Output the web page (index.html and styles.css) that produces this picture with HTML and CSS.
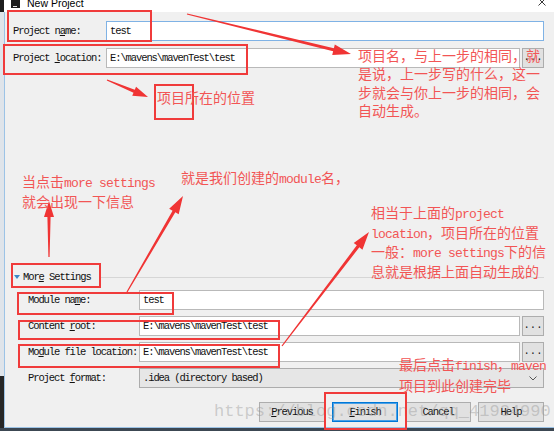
FILE: index.html
```html
<!DOCTYPE html>
<html lang="zh-CN">
<head>
<meta charset="utf-8">
<title>New Project</title>
<link rel="stylesheet" href="styles.css">
</head>
<body>
<div class="screen">
  <div class="titlebar">
    <span class="app-icon"><span class="app-icon-bar"></span></span>
    <span class="title">New Project</span>
    <svg class="close" width="8" height="8" viewBox="0 0 8 8"><path d="M0.5 0.5L7.5 7.5M7.5 0.5L0.5 7.5" stroke="#3a3a3a" stroke-width="1"/></svg>
  </div>
  <div class="frame">
    <div class="edge"></div>
    <div class="dialog">
      <div class="form top-form">
        <span class="lbl">Project n<u>a</u>me:</span>
        <div class="input focus">test</div>
        <span class="lbl">Project <u>l</u>ocation:</span>
        <div class="field"><div class="input">E:\mavens\mavenTest\test</div><div class="browse">...</div></div>
      </div>
      <div class="more">
        <span class="tri"></span><span class="lbl">Mor<u>e</u> Settings</span><span class="sep"></span>
      </div>
      <div class="form module-form">
        <span class="lbl">Module na<u>m</u>e:</span>
        <div class="input">test</div>
        <span class="lbl">Content <u>r</u>oot:</span>
        <div class="field"><div class="input">E:\mavens\mavenTest\test</div><div class="browse">...</div></div>
        <span class="lbl">Mo<u>d</u>ule file location:</span>
        <div class="field"><div class="input">E:\mavens\mavenTest\test</div><div class="browse">...</div></div>
        <span class="lbl">Project <u>f</u>ormat:</span>
        <div class="combo"><span>.idea (directory based)</span><svg class="chev" width="8" height="5" viewBox="0 0 8 5"><path d="M0.5 0.5L4 4L7.5 0.5" fill="none" stroke="#555" stroke-width="1"/></svg></div>
      </div>
      <div class="buttons">
        <div class="btn"><u>P</u>revious</div>
        <div class="btn default"><u>F</u>inish</div>
        <div class="btn">Cancel</div>
        <div class="btn">Help</div>
      </div>
    </div>
  </div>
  <div class="taskbar"></div>

  <div class="notes">
    <div class="watermark">https://blog.csdn.net/qq_41934990</div>

    <div class="box box-name"></div>
    <div class="box box-loc"></div>
    <div class="box box-small"></div>
    <div class="box box-more"></div>
    <div class="box box-mname"></div>
    <div class="box box-root"></div>
    <div class="box box-mfile"></div>
    <div class="box box-finish"></div>

    <svg class="arrows" width="554" height="431" viewBox="0 0 554 431">
      <polygon points="186.86,14.58 333.13,51.28 332.21,55.07 351,54 334.81,44.39 333.89,48.18 187.14,13.42"/>
      <polygon points="106.77,80.55 133.53,92.73 132.22,95.87 148,97 136.06,86.63 134.75,89.77 107.23,79.45"/>
      <polygon points="49.6,257 50.6,217 54,217 49,201 44,217 47.4,217 48.4,257"/>
      <polygon points="127.52,292.3 175.31,212.36 178.68,214.32 183,196 169.18,208.78 172.55,210.74 126.48,291.7"/>
      <polygon points="282.48,346.36 359.35,247.28 362.45,249.65 369,232 353.71,242.97 356.81,245.34 281.52,345.64"/>
    </svg>

    <div class="note note-a">项目名，与上一步的相同，就<br>是说，上一步写的什么，这一<br>步就会与你上一步的相同，会<br>自动生成。</div>
    <div class="note note-b">项目所在的位置</div>
    <div class="note note-c">当点击<span class="m">more settings</span><br>就会出现一下信息</div>
    <div class="note note-d">就是我们创建的<span class="m">module</span>名，</div>
    <div class="note note-e">相当于上面的<span class="m">project</span><br><span class="m">location</span>，项目所在的位置<br>一般：<span class="m">more settings</span>下的信<br>息就是根据上面自动生成的</div>
    <div class="note note-f">最后点击<span class="m">finish</span>，<span class="m">maven</span><br>项目到此创建完毕</div>
  </div>
</div>
</body>
</html>
```

FILE: styles.css
```css
* { box-sizing: border-box; }

html, body {
  margin: 0;
  padding: 0;
}

body {
  width: 554px;
  height: 431px;
  overflow: hidden;
  background: #f0f0f0;
}

.screen {
  position: relative;
  width: 554px;
  height: 431px;
  display: flex;
  flex-direction: column;
  font-family: "Liberation Mono", monospace;
  font-size: 10.5px;
  letter-spacing: -1.1px;
  color: #111;
}

.titlebar {
  height: 12px;
  flex: none;
  display: flex;
  align-items: flex-start;
  background: #ffffff;
  border-left: 4px solid #1d1d1d;
  padding-left: 7px;
  overflow: hidden;
}

.app-icon {
  width: 9px;
  height: 8px;
  background: #1b1b1b;
  position: relative;
  flex: none;
}

.app-icon-bar {
  position: absolute;
  left: 2px;
  bottom: 1px;
  width: 4px;
  height: 1px;
  background: #e0e0e0;
}

.title {
  margin-left: 7px;
  margin-top: -2px;
  font-family: "Liberation Sans", Arial, sans-serif;
  font-size: 10.5px;
  line-height: 10.5px;
  letter-spacing: 0;
  color: #000;
}

.close {
  margin-left: auto;
  margin-right: 8px;
  margin-top: -2px;
}

.frame {
  flex: 1;
  display: flex;
  min-height: 0;
}

.edge {
  width: 4px;
  flex: none;
  background: linear-gradient(to bottom, #dfe4ea 0, #dfe4ea 364px, #262626 364px);
}

.dialog {
  flex: 1;
  background: #f0f0f0;
  border-left: 1px solid #9cc3e6;
  border-bottom: 1px solid #9cc3e6;
  padding: 9px 10px 0 8px;
}

.form {
  display: grid;
  grid-auto-rows: 20px;
  align-items: center;
}

.top-form {
  grid-template-columns: 93px 1fr;
  row-gap: 7px;
}

.module-form {
  margin-top: 5px;
  padding-left: 15px;
  grid-template-columns: 111px 1fr;
  row-gap: 6px;
}

.lbl {
  white-space: nowrap;
  color: #111;
}

.input {
  height: 20px;
  background: #ffffff;
  border: 1px solid #b9b9b9;
  padding-left: 3px;
  line-height: 18px;
  white-space: nowrap;
  overflow: hidden;
  color: #111;
}

.input.focus {
  border-color: #7fb2e5;
}

.field {
  display: flex;
  gap: 2px;
  height: 20px;
}

.field .input {
  flex: 1;
}

.browse {
  width: 22px;
  flex: none;
  background: #e1e1e1;
  border: 1px solid #adadad;
  text-align: center;
  line-height: 17px;
  letter-spacing: 0;
  color: #222;
}

.combo {
  height: 20px;
  background: #e6e6e6;
  border: 1px solid #acacac;
  display: flex;
  align-items: center;
  padding: 0 6px 0 3px;
  justify-content: space-between;
  white-space: nowrap;
}

.more {
  margin-top: 201px;
  height: 16px;
  display: flex;
  align-items: center;
}

.tri {
  width: 0;
  height: 0;
  margin-left: 1px;
  border-left: 3px solid transparent;
  border-right: 3px solid transparent;
  border-top: 4px solid #3d86c6;
  margin-right: 3px;
}

.sep {
  flex: 1;
  height: 1px;
  background: #d6d6d6;
  margin-left: 10px;
  margin-top: 1px;
}

.buttons {
  margin-top: 14px;
  display: flex;
  justify-content: flex-end;
  gap: 7px;
}

.btn {
  width: 66px;
  height: 20px;
  background: #e1e1e1;
  border: 1px solid #adadad;
  text-align: center;
  line-height: 18px;
  color: #111;
}

.btn.default {
  border-color: #0078d7;
  box-shadow: inset 0 0 0 1px #4aa0e6;
}

.taskbar {
  height: 3px;
  flex: none;
  background: #3c4752;
}

.notes {
  position: absolute;
  left: 0;
  top: 0;
  width: 554px;
  height: 431px;
  pointer-events: none;
}

.watermark {
  position: absolute;
  left: 214px;
  top: 403px;
  font-family: "Liberation Mono", monospace;
  font-size: 17px;
  line-height: 17px;
  letter-spacing: 0;
  color: rgba(150, 150, 150, 0.42);
  white-space: nowrap;
}

.box {
  position: absolute;
  border: 2px solid #f03b3b;
}

.box-name { left: 7px; top: 10px; width: 145px; height: 32px; }
.box-loc { left: 3px; top: 44px; width: 245px; height: 31px; }
.box-small { left: 154px; top: 84px; width: 40px; height: 36px; }
.box-more { left: 11px; top: 263px; width: 90px; height: 25px; }
.box-mname { left: 17px; top: 292px; width: 157px; height: 23px; }
.box-root { left: 18px; top: 320px; width: 262px; height: 20px; }
.box-mfile { left: 18px; top: 344px; width: 262px; height: 24px; }
.box-finish { left: 324px; top: 392px; width: 83px; height: 38px; }

.arrows {
  position: absolute;
  left: 0;
  top: 0;
}

.arrows polygon {
  fill: #f03434;
}

.note {
  position: absolute;
  font-family: "Noto Sans CJK SC", sans-serif;
  font-size: 14px;
  line-height: 18px;
  letter-spacing: 0;
  color: #f25555;
  white-space: nowrap;
}

.note .m {
  font-family: "Liberation Mono", monospace;
  font-size: 13px;
  letter-spacing: -0.8px;
}

.note-a { left: 358px; top: 46px; line-height: 18.3px; }
.note-b { left: 157px; top: 88px; }
.note-c { left: 22px; top: 173px; line-height: 17.5px; }
.note-d { left: 181px; top: 168px; }
.note-e { left: 371px; top: 204px; line-height: 17.7px; }
.note-f { left: 399px; top: 355px; }
```
